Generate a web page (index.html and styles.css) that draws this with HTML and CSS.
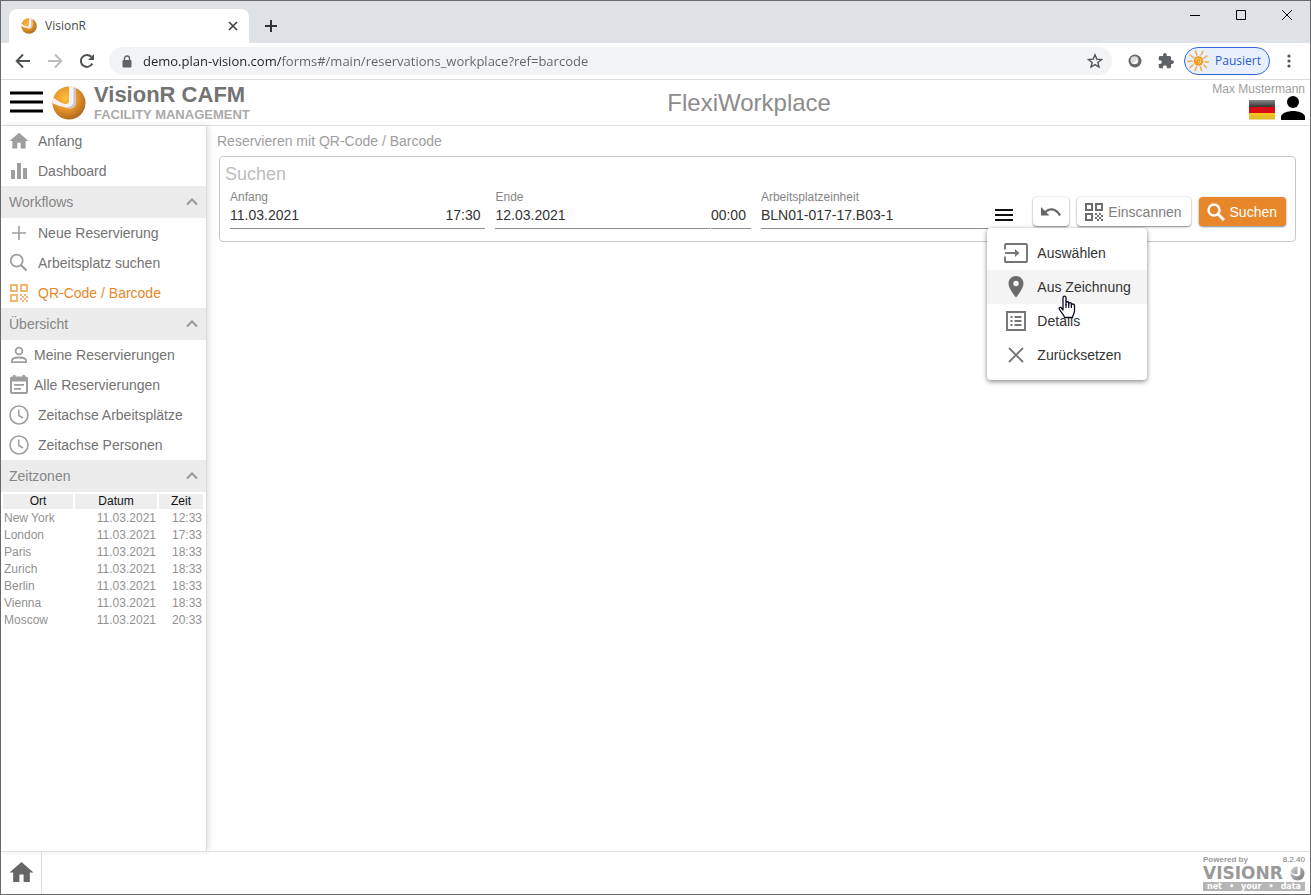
FILE: index.html
```html
<!DOCTYPE html>
<html lang="de">
<head>
<meta charset="utf-8">
<title>VisionR</title>
<link rel="stylesheet" href="styles.css">
</head>
<body>
<svg class="defs" aria-hidden="true">
  <defs>
    <radialGradient id="orange" cx="40%" cy="35%" r="70%"><stop offset="0" stop-color="#ffbe3c"/><stop offset=".5" stop-color="#e8962a"/><stop offset="1" stop-color="#a8651c"/></radialGradient>
    <linearGradient id="silver" x1="0" y1="0" x2="1" y2="1"><stop offset="0" stop-color="#cfcfcf"/><stop offset="1" stop-color="#777"/></linearGradient>
    <linearGradient id="fl1" x1="0" y1="0" x2="0" y2="1"><stop offset="0" stop-color="#8a8a8a"/><stop offset="1" stop-color="#333"/></linearGradient>
    <linearGradient id="fl3" x1="0" y1="0" x2="0" y2="1"><stop offset="0" stop-color="#f3c81c"/><stop offset="1" stop-color="#dfb62c"/></linearGradient>
  </defs>
  <symbol id="ball" viewBox="0 0 34 34">
    <circle cx="17" cy="17" r="16.500" fill="url(#orange)"/>
    <path d="M0.500 17 1.500 11.500C5 14.500 9 17 13 18Q17 18.500 17 15V0.500H24V16C24 21 20 23.500 15.500 22 9 20.500 4 19 .5 17Z" fill="#f6f2f4"/>
    <path d="M21.500 1V16Q21 21 15 21.200L17 22.500Q24 22.500 24 16.500V2Z" fill="#cbc3d0"/>
  </symbol>
  <symbol id="home" viewBox="0 0 24 24"><path d="M10 21v-7h4v7h6v-9h3.500L12 2 .5 12H4v9z"/></symbol>
  <symbol id="chev" viewBox="0 0 14 10"><path d="M2 7.500 7 2.500 12 7.500" fill="none" stroke="currentColor" stroke-width="2"/></symbol>
  <symbol id="qr" viewBox="0 0 18 18"><path d="M0 0h8v8H0zM2 2v4h4V2zM10 0h8v8h-8zM12 2v4h4V2zM0 10h8v8H0zM2 12v4h4v-4z" fill-rule="evenodd"/><path d="M10 10h2v2h-2zM14 10h2v2h-2zM12 12h2v2h-2zM16 12h2v2h-2zM10 14h2v2h-2zM14 14h2v2h-2zM12 16h2v2h-2zM16 16h2v2h-2z"/></symbol>
  <symbol id="clock" viewBox="0 0 20 20"><circle cx="10" cy="10" r="9" fill="none" stroke="currentColor" stroke-width="1.600"/><path d="M9.800 4.500V10.500L14 13" fill="none" stroke="currentColor" stroke-width="1.500"/></symbol>
</svg>

<div class="window">
  <div class="tabstrip">
    <div class="tab">
      <svg class="i16"><use href="#ball"/></svg>
      <span class="tab-title">VisionR</span>
      <button class="bare" aria-label="Tab schließen"><svg class="i10" viewBox="0 0 10 10"><path d="M1 1 9 9M9 1 1 9" stroke="#3c4043" stroke-width="1.600"/></svg></button>
    </div>
    <button class="bare newtab" aria-label="Neuer Tab"><svg class="i12" viewBox="0 0 12 12"><path d="M6 0V12M0 6H12" stroke="#303134" stroke-width="2"/></svg></button>
    <div class="wincontrols">
      <button class="bare" aria-label="Minimieren"><svg class="i12" viewBox="0 0 12 12"><path d="M1 6.500H11" stroke="#000"/></svg></button>
      <button class="bare" aria-label="Maximieren"><svg class="i12" viewBox="0 0 12 12"><path d="M1.500 1.500H10.500V10.500H1.500Z" fill="none" stroke="#000"/></svg></button>
      <button class="bare" aria-label="Schließen"><svg class="i12" viewBox="0 0 12 12"><path d="M1 1 11 11M11 1 1 11" stroke="#000"/></svg></button>
    </div>
  </div>

  <div class="toolbar">
    <button class="bare" aria-label="Zurück"><svg class="i16" viewBox="0 0 16 16"><path d="M15 8H2M8 1.500 1.700 8 8 14.500" fill="none" stroke="#4f5357" stroke-width="1.900"/></svg></button>
    <button class="bare" aria-label="Vorwärts"><svg class="i16" viewBox="0 0 16 16"><path d="M1 8H14M8 1.500 14.300 8 8 14.500" fill="none" stroke="#babcbe" stroke-width="1.900"/></svg></button>
    <button class="bare" aria-label="Neu laden"><svg class="i16" viewBox="0 0 16 16"><path d="M13.300 10.500A6 6 0 1 1 12.300 3.800" fill="none" stroke="#4f5357" stroke-width="2"/><path d="M15 1V7H9Z" fill="#4f5357"/></svg></button>
    <div class="omnibox">
      <svg class="lock" viewBox="0 0 10 13"><rect x="0.500" y="5" width="9" height="7.500" rx="1" fill="#5f6368"/><path d="M2.500 5V3.500a2.500 2.500 0 0 1 5 0V5" fill="none" stroke="#5f6368" stroke-width="1.400"/></svg>
      <input class="url" aria-label="Adresse" value="demo.plan-vision.com/forms#/main/reservations_workplace?ref=barcode">
      <button class="bare" aria-label="Lesezeichen"><svg class="i16" viewBox="0 0 16 16"><path d="M8 1.800 9.800 6.100 14.500 6.500 10.900 9.500 12 14 8 11.600 4 14 5.100 9.500 1.500 6.500 6.200 6.100Z" fill="none" stroke="#4f5357" stroke-width="1.400"/></svg></button>
    </div>
    <button class="bare" aria-label="Erweiterung"><svg class="i14" viewBox="0 0 14 14"><circle cx="7" cy="7" r="6.500" fill="#686868"/><circle cx="6.500" cy="6.300" r="4" fill="#dcdcdc"/><path d="M8 3.500A4 4 0 0 1 4 9 5 5 0 0 0 10 8.500Z" fill="#fff"/></svg></button>
    <button class="bare" aria-label="Erweiterungen"><svg class="i16" viewBox="1 1 22 22"><path fill="#5f6368" d="M20.500 11H19V7c0-1.100-.9-2-2-2h-4V3.500a2.500 2.500 0 0 0-5 0V5H4c-1.100 0-1.990.9-1.990 2v3.800H3.500a2.700 2.700 0 0 1 0 5.400H2V20c0 1.100.9 2 2 2h3.800v-1.500a2.700 2.700 0 0 1 5.400 0V22H17c1.100 0 2-.9 2-2v-4h1.500a2.500 2.500 0 0 0 0-5z"/></svg></button>
    <button class="profile">
      <svg class="sun" viewBox="0 0 22 22"><g stroke="#f3a93c" stroke-width="1.500" fill="none" stroke-linecap="round"><path d="M10 5 8.500 1M14 5 16 1.500M17 8 20 6M18 12H21.500M17 15 19.500 17.500M13.500 17 14.500 20.500M9.500 17 8 20.500M6 15 3 17.500M5 11 1 11.500M6.500 7.500 3 5"/></g><circle cx="11.500" cy="11" r="4.800" fill="#f59b1e"/><path d="M9 11a2.500 2.500 0 1 1 3 2.500M11 11.500h1" stroke="#ffd58a" fill="none"/></svg>
      <span>Pausiert</span>
    </button>
    <button class="bare" aria-label="Menü"><svg class="dots" viewBox="0 0 4 14"><g fill="#4f5357"><circle cx="2" cy="2" r="1.600"/><circle cx="2" cy="7" r="1.600"/><circle cx="2" cy="12" r="1.600"/></g></svg></button>
  </div>

  <header class="appbar">
    <button class="bare" aria-label="Navigation"><svg class="burger" viewBox="0 0 33 23"><path d="M0 2H33M0 11H33M0 20H33" stroke="#000" stroke-width="3"/></svg></button>
    <svg class="logo"><use href="#ball"/></svg>
    <div class="brand"><strong>VisionR CAFM</strong><b>FACILITY MANAGEMENT</b></div>
    <h1>FlexiWorkplace</h1>
    <div class="user">
      <span>Max Mustermann</span>
      <div class="user-icons">
        <svg class="flag" viewBox="0 0 26 20"><rect width="26" height="7" fill="url(#fl1)"/><rect y="7" width="26" height="6" fill="#d80c12"/><rect y="13" width="26" height="6.500" fill="url(#fl3)"/></svg>
        <svg class="person" viewBox="0 0 24 24"><ellipse cx="12" cy="6" rx="6" ry="6"/><path d="M0 24v-3c0-4 7-6 12-6s12 2 12 6v3z"/></svg>
      </div>
    </div>
  </header>

  <div class="body">
    <nav class="sidebar">
      <a class="item" href="#"><svg class="ic"><use href="#home"/></svg>Anfang</a>
      <a class="item" href="#"><svg class="ic" viewBox="0 0 20 20"><path d="M2 9h4v9H2zM8 2h4v16H8zM14 7h4v11h-4z"/></svg>Dashboard</a>
      <button class="section">Workflows<svg class="chev"><use href="#chev"/></svg></button>
      <a class="item" href="#"><svg class="ic" viewBox="0 0 20 20"><path d="M9.200 3h1.600v6.200H17v1.600h-6.200V17H9.200v-6.200H3V9.200h6.200z"/></svg>Neue Reservierung</a>
      <a class="item" href="#"><svg class="ic" viewBox="0 0 20 20"><path d="M12 12 17.500 17.500" fill="none" stroke="currentColor" stroke-width="2.200"/><circle cx="7.700" cy="7.700" r="6" fill="none" stroke="currentColor" stroke-width="1.800"/></svg>Arbeitsplatz suchen</a>
      <a class="item active" href="#"><svg class="ic" viewBox="0 0 20 20"><use href="#qr" x="1" y="1" width="18" height="18"/></svg>QR-Code / Barcode</a>
      <button class="section">Übersicht<svg class="chev"><use href="#chev"/></svg></button>
      <a class="item tight" href="#"><svg class="ic" viewBox="0 0 20 20"><circle cx="10" cy="6" r="3.400" fill="none" stroke="currentColor" stroke-width="1.800"/><path d="M2.800 17.200V16c0-2.500 4-3.500 7.200-3.500s7.200 1 7.200 3.500v1.200z" fill="none" stroke="currentColor" stroke-width="1.800"/></svg>Meine Reservierungen</a>
      <a class="item tight" href="#"><svg class="ic" viewBox="0 0 20 20"><path d="M3 1.500h1V0h2.500v1.500h7V0H16v1.500h1a2 2 0 0 1 2 2V17a2 2 0 0 1-2 2H3a2 2 0 0 1-2-2V3.500a2 2 0 0 1 2-2zM3 6.500V17h14V6.500zM5 9h10v1.800H5zM5 13h7v1.800H5z" fill-rule="evenodd"/></svg>Alle Reservierungen</a>
      <a class="item" href="#"><svg class="ic"><use href="#clock"/></svg>Zeitachse Arbeitsplätze</a>
      <a class="item" href="#"><svg class="ic"><use href="#clock"/></svg>Zeitachse Personen</a>
      <button class="section">Zeitzonen<svg class="chev"><use href="#chev"/></svg></button>
      <table class="zones">
        <thead><tr><th class="city">Ort</th><th class="date">Datum</th><th class="time">Zeit</th></tr></thead>
        <tbody>
          <tr><td>New York</td><td>11.03.2021</td><td>12:33</td></tr>
          <tr><td>London</td><td>11.03.2021</td><td>17:33</td></tr>
          <tr><td>Paris</td><td>11.03.2021</td><td>18:33</td></tr>
          <tr><td>Zurich</td><td>11.03.2021</td><td>18:33</td></tr>
          <tr><td>Berlin</td><td>11.03.2021</td><td>18:33</td></tr>
          <tr><td>Vienna</td><td>11.03.2021</td><td>18:33</td></tr>
          <tr><td>Moscow</td><td>11.03.2021</td><td>20:33</td></tr>
        </tbody>
      </table>
    </nav>

    <main class="main">
      <div class="crumb">Reservieren mit QR-Code / Barcode</div>
      <form class="panel">
        <h2>Suchen</h2>
        <div class="row">
          <div class="field">
            <label for="start">Anfang</label>
            <div class="line"><input id="start" class="grow" value="11.03.2021"><input class="clockin" aria-label="Anfang Uhrzeit" value="17:30"></div>
          </div>
          <div class="field">
            <label for="end">Ende</label>
            <div class="line split"><input id="end" class="grow" value="12.03.2021"><input class="clockin" aria-label="Ende Uhrzeit" value="00:00"></div>
          </div>
          <div class="field unit">
            <label for="unit">Arbeitsplatzeinheit</label>
            <div class="line"><input id="unit" class="grow" value="BLN01-017-17.B03-1"><button type="button" class="bare more" aria-label="Optionen"><svg viewBox="0 0 18 12"><path d="M0 1H18M0 6H18M0 11H18" stroke="#111" stroke-width="2"/></svg></button></div>
            <div class="menu" role="menu">
              <button type="button" role="menuitem"><svg viewBox="0 0 24 24"><path d="M1 8.500V4Q1 3 2 3H22Q23 3 23 4V20Q23 21 22 21H2Q1 21 1 20V15.500" fill="none" stroke="#757575" stroke-width="1.900"/><path d="M1 12H12" stroke="#757575" stroke-width="1.900"/><path d="M11 8 15.500 12 11 16Z" fill="#757575"/></svg>Auswählen</button>
              <button type="button" role="menuitem" class="hover"><svg viewBox="0 0 24 24"><path fill="#6b6b6b" d="M12 1C7.800 1 4.500 4.300 4.500 8.500 4.500 14 12 22.500 12 22.500S19.500 14 19.500 8.500C19.500 4.300 16.200 1 12 1zm0 10.200a2.700 2.700 0 1 1 0-5.400 2.700 2.700 0 0 1 0 5.400z"/></svg>Aus Zeichnung
                <svg class="cursor" viewBox="0 0 18 24"><path d="M5 15V3C5 .6 8 .6 8 3V10 8C8 6.300 10.700 6.300 10.700 8V10 8.800C10.700 7.300 13.400 7.300 13.400 8.800V10.500 10C13.400 8.500 16.500 8.700 16.500 10.500V16C16.500 18 15 19.500 14.500 22.500H6.500C6 20 4 18.500 1.500 14.500 .3 12.800 2.500 11.500 3.500 13Z" fill="#fff" stroke="#0b0b25" stroke-width="1.300" stroke-linejoin="round"/><path d="M8 9V13M10.700 9.500V13M13.400 10V13" stroke="#0b0b25" stroke-width="1.200"/></svg></button>
              <button type="button" role="menuitem"><svg viewBox="0 0 24 24"><path d="M3 3H21V21H3Z" fill="none" stroke="#757575" stroke-width="1.900"/><path d="M6.500 8H8.500M6.500 12H8.500M6.500 16H8.500M10.500 8H17.500M10.500 12H17.500M10.500 16H17.500" stroke="#757575" stroke-width="1.800"/></svg>Details</button>
              <button type="button" role="menuitem"><svg viewBox="0 0 24 24"><path d="M5 5 19 19M19 5 5 19" stroke="#757575" stroke-width="1.800"/></svg>Zurücksetzen</button>
            </div>
          </div>
          <div class="actions">
            <button type="button" class="btn icon-only" aria-label="Zurücksetzen"><svg class="undo" viewBox="0 0 20 12"><path d="M0 1V9.500H8.500L5.500 6.500C10 3 15 4.500 18 10L20 9C16.500 2 9 0 4 4.900Z" fill="#666"/></svg></button>
            <button type="button" class="btn"><svg class="i18 qricon"><use href="#qr"/></svg>Einscannen</button>
            <button type="submit" class="btn primary"><svg class="i18" viewBox="0 0 18 18"><circle cx="7" cy="7" r="5.500" fill="none" stroke="#fff" stroke-width="2.400"/><path d="M11 11 17 17" stroke="#fff" stroke-width="3"/></svg>Suchen</button>
          </div>
        </div>
      </form>
    </main>
  </div>

  <footer class="footer">
    <a class="foothome" href="#" aria-label="Startseite"><svg><use href="#home"/></svg></a>
    <div class="powered">
      <div class="pw-top"><b>Powered by</b><span>8.2.40</span></div>
      <div class="pw-name"><b>VISIONR</b><svg viewBox="0 0 16 16"><circle cx="8" cy="8" r="7.500" fill="url(#silver)"/><path d="M.5 6C3 8.500 8 10 8 7.500V.5H11V8C11 12 4 12 .5 7Z" fill="#fff"/></svg></div>
      <div class="pw-tag"><span>net</span><span>•</span><span>your</span><span>•</span><span>data</span></div>
    </div>
  </footer>
</div>
</body>
</html>
```

FILE: styles.css
```css
* { box-sizing: border-box; }
body {
  margin: 0;
  background: #fff;
  color: #737373;
  font: 14px/18px "Liberation Sans", Arial, sans-serif;
}
button, input { font: inherit; color: inherit; }
button { cursor: pointer; }
svg { display: block; flex: none; }
.defs { position: absolute; width: 0; height: 0; }
.bare { display: flex; align-items: center; justify-content: center; padding: 0; border: 0; background: none; }
.i10 { width: 10px; height: 10px; }
.i12 { width: 12px; height: 12px; }
.i14 { width: 14px; height: 14px; }
.i16 { width: 16px; height: 16px; }
.i18 { width: 18px; height: 18px; }

.window { display: flex; flex-direction: column; min-height: 100vh; border: 1px solid #6a6a6c; }

/* Browser frame */
.tabstrip, .toolbar { font-family: "Open Sans", "Noto Sans", sans-serif; }
.tabstrip { display: flex; height: 42px; padding-left: 8px; background: #dee1e6; }
.tab { display: flex; align-items: center; gap: 8px; width: 240px; margin-top: 8px; padding: 0 11px 0 12px; background: #fff; border-radius: 8px 8px 0 0; color: #45494d; font-size: 12px; }
.tab-title { flex: 1; }
.newtab { width: 28px; height: 28px; margin: 11px 0 0 8px; }
.wincontrols { display: flex; height: 28px; margin-left: auto; }
.wincontrols .bare { width: 46px; }
.toolbar { display: flex; align-items: center; height: 37px; padding: 0 19px 0 14px; border-bottom: 1px solid #dadce0; }
.toolbar > .bare + .bare { margin-left: 16px; }
.omnibox { display: flex; align-items: center; flex: 1; height: 28px; margin: 0 16px 0 14px; padding: 0 9px 0 13px; border-radius: 14px; background: #f1f3f4; }
.lock { width: 10px; height: 13px; }
.url { flex: 1; min-width: 0; margin-left: 11px; padding: 0; border: 0; outline: 0; font-size: 13px; background: linear-gradient(90deg, #202124 138px, #5f6368 138px); background-clip: text; color: transparent; }
.profile { display: flex; align-items: center; gap: 6px; height: 28px; margin: 0 17px 0 10px; padding: 0 8px 0 2px; border: 1px solid #3367d6; border-radius: 14px; background: #e8f0fe; color: #2a5bd0; font-size: 12px; }
.sun { width: 22px; height: 22px; }
.dots { width: 4px; height: 14px; }

/* Application header */
.appbar { display: flex; align-items: center; height: 46px; padding: 0 5px 0 9px; border-bottom: 1px solid #e0e0e0; }
.burger { width: 33px; height: 23px; }
.logo { width: 34px; height: 34px; margin: 0 8px 0 9px; }
.brand { display: flex; flex-direction: column; width: 192px; }
.brand strong { color: #737373; font-size: 22px; line-height: 24px; }
.brand b { color: #aaa; font-size: 13px; line-height: 15px; }
.appbar h1 { flex: 1; margin: 0; color: #8c8c8c; font-size: 24px; font-weight: 400; text-align: center; }
.user { display: flex; flex-direction: column; align-items: flex-end; align-self: flex-start; padding-top: 2px; color: #9e9e9e; font-size: 12px; line-height: 14px; }
.user-icons { display: flex; align-items: flex-end; gap: 6px; color: #000; }
.flag { width: 26px; height: 20px; }
.person { width: 24px; height: 24px; }

.body { display: flex; flex: 1; }

/* Sidebar */
.sidebar { width: 206px; border-right: 1px solid #dcdcdc; box-shadow: 2px 0 6px rgba(0, 0, 0, .12); }
.item { display: flex; align-items: center; gap: 9px; height: 30px; padding-left: 8px; color: #737373; text-decoration: none; }
.item.tight { gap: 5px; }
.ic { width: 20px; height: 20px; color: #9e9e9e; fill: currentColor; }
.item.active { color: #e8862a; }
.item.active .ic { color: #f2b574; }
.section { display: flex; align-items: center; justify-content: space-between; width: 100%; height: 32px; padding: 0 7px 0 8px; border: 0; background: #ececec; color: #858585; }
.chev { width: 14px; height: 10px; color: #999; }
.zones { width: 204px; border-spacing: 2px; table-layout: fixed; font-size: 12px; line-height: 15px; color: #919191; }
.zones th { padding: 0; background: #eee; color: #111; font-weight: 400; }
.zones td { padding: 0 1px; text-align: right; }
.zones td:first-child { text-align: left; }
.zones .city { width: 70px; }
.zones .time { width: 44px; }

/* Search form */
.main { flex: 1; min-width: 0; padding: 6px 14px 0 10px; }
.crumb { color: #9e9e9e; }
.panel { margin: 6px 0 0 2px; padding: 7px 9px 12px 10px; border: 1px solid #c8c8c8; border-radius: 4px; }
.panel h2 { margin: 0 0 0 -5px; color: #bdbdbd; font-size: 18px; line-height: 20px; font-weight: 400; }
.row { display: flex; align-items: flex-end; gap: 10px; }
.field { position: relative; flex: 1; min-width: 0; margin-top: 5px; }
.field label { display: block; color: #858585; font-size: 12px; line-height: 16px; }
.line { display: flex; }
.line input { height: 24px; min-width: 0; padding: 0 0 4px; border: 0; border-bottom: 1px solid #8f8f8f; border-radius: 0; outline: 0; background: none; color: #333; }
.grow { flex: 1; }
.clockin { width: 40px; }
.split { gap: 1px; }
.more { width: 28px; height: 24px; padding: 0 0 4px 4px; }
.more svg { width: 18px; height: 12px; }
.actions { display: flex; gap: 8px; margin: 0 0 3px 7px; }
.btn { display: flex; align-items: center; gap: 5px; height: 29px; padding: 0 9px 0 8px; border: 0; border-radius: 4px; background: #fff; box-shadow: 0 1px 2px rgba(0, 0, 0, .45), 0 0 2px rgba(0, 0, 0, .12); color: #808080; }
.icon-only { padding: 0 8px; }
.undo { width: 20px; height: 12px; }
.qricon { fill: #6e6e6e; }
.primary { background: #e8862a; color: #fff; }

.menu { position: absolute; z-index: 2; top: 39px; right: -131px; width: 160px; padding: 8px 0; border-radius: 4px; background: #fff; box-shadow: 0 2px 5px rgba(0, 0, 0, .4), 0 0 3px rgba(0, 0, 0, .15); }
.menu button { position: relative; display: flex; align-items: center; gap: 9px; width: 100%; height: 34px; padding: 0 0 0 17px; border: 0; background: none; color: #333; }
.menu button.hover { z-index: 1; background: #f4f4f4; }
.menu svg { width: 24px; height: 24px; }
.menu .cursor { position: absolute; left: 71px; top: 25px; width: 18px; height: 24px; }

/* Footer */
.footer { display: flex; height: 43px; border-top: 1px solid #e0e0e0; }
.foothome { display: flex; align-items: center; justify-content: center; width: 41px; padding-bottom: 2px; border-right: 1px solid #dcdcdc; }
.foothome svg { width: 25px; height: 25px; fill: #666; }
.powered { display: flex; flex-direction: column; width: 102px; margin: 3px 5px 0 auto; font-family: "DejaVu Sans", sans-serif; color: #999; }
.pw-top, .pw-name, .pw-tag { display: flex; align-items: center; justify-content: space-between; }
.pw-top { font: 8px/9px "Liberation Sans", Arial, sans-serif; }
.pw-top b { color: #999; }
.pw-top span { color: #777; }
.pw-name { font-size: 17px; line-height: 18px; }
.pw-name svg { width: 15px; height: 15px; }
.pw-tag { padding: 0 4px; background: #b5b5b5; color: #fff; font-size: 8px; line-height: 9px; font-weight: 700; }
```
